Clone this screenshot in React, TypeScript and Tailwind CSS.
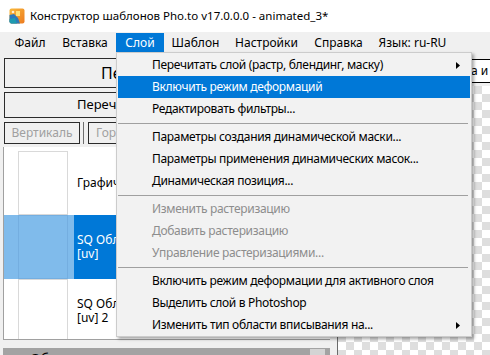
import React from "react";

type Item = { t: string; arrow?: boolean; hl?: boolean; dis?: boolean } | "sep";

const menuItems: Item[] = [
  { t: "Перечитать слой (растр, блендинг, маску)", arrow: true },
  { t: "Включить режим деформаций", hl: true },
  { t: "Редактировать фильтры..." },
  "sep",
  { t: "Параметры создания динамической маски..." },
  { t: "Параметры применения динамических масок..." },
  { t: "Динамическая позиция..." },
  "sep",
  { t: "Изменить растеризацию", dis: true },
  { t: "Добавить растеризацию", dis: true },
  { t: "Управление растеризациями...", dis: true },
  "sep",
  { t: "Включить режим деформации для активного слоя" },
  { t: "Выделить слой в Photoshop" },
  { t: "Изменить тип области вписывания на...", arrow: true },
];

function AppIcon() {
  return (
    <svg width="16" height="16" viewBox="0 0 16 16">
      <defs>
        <linearGradient id="ig" x1="0" y1="0" x2="1" y2="1">
          <stop offset="0" stopColor="#f9b93a" />
          <stop offset="1" stopColor="#ec7a1f" />
        </linearGradient>
      </defs>
      <rect x="0.5" y="0.5" width="15" height="15" rx="2" fill="url(#ig)" />
      <path d="M0.5 7 L5 6 L9 10 L11 15.5 L2.5 15.5 Q0.5 15.5 0.5 13.5 Z" fill="#2d79b9" />
      <path d="M0.5 11 L6 10 L8 15.5 L2.5 15.5 Q0.5 15.5 0.5 13.5 Z" fill="#1f9bb0" />
      <rect x="7" y="3" width="4" height="5" fill="#ffe27a" />
      <circle cx="4" cy="4" r="1.3" fill="#ffffff" opacity="0.8" />
    </svg>
  );
}

function Arrow() {
  return (
    <svg width="4" height="7" viewBox="0 0 4 7">
      <path d="M0 0 L4 3.5 L0 7 Z" fill="#000" />
    </svg>
  );
}

const menuBar: { t: string; w: string; hl?: boolean }[] = [
  { t: "Файл", w: "w-[48px]" },
  { t: "Вставка", w: "w-[62px]" },
  { t: "Слой", w: "w-[48px]", hl: true },
  { t: "Шаблон", w: "w-[63px]" },
  { t: "Настройки", w: "w-[79px]" },
  { t: "Справка", w: "w-[65px]" },
  { t: "Язык: ru-RU", w: "w-[83px]" },
];

function ListRow({ lines, selected }: { lines: string[]; selected?: boolean }) {
  return (
    <div className="flex h-[64px] shrink-0">
      <div className={`w-[70px] h-full pl-[14px] pr-[5px] ${selected ? "bg-[#80bbeb]" : "bg-white"}`}>
        <div className={`w-[50px] h-full border ${selected ? "border-[#74aee0]" : "border-[#d9d9d9]"}`} />
      </div>
      <div
        className={`flex-1 flex flex-col justify-center pl-[3px] leading-[14px] whitespace-nowrap ${
          selected ? "bg-[#0078d7] text-white" : "bg-white text-black"
        }`}
      >
        {lines.map((l) => (
          <div key={l}>{l}</div>
        ))}
      </div>
    </div>
  );
}

export default function App() {
  return (
    <div className="w-[490px] h-[355px] overflow-hidden relative bg-[#f0f0f0] text-[12px] text-black font-['Noto_Sans',sans-serif]">
      {/* Title bar */}
      <div className="h-[32px] bg-white flex items-center">
        <div className="ml-[9px] w-[16px] h-[16px]">
          <AppIcon />
        </div>
        <div className="ml-[5px] whitespace-nowrap text-[11.5px]">
          Конструктор шаблонов Pho.to v17.0.0.0 - animated_3*
        </div>
      </div>

      {/* Menu bar */}
      <div className="h-[21px] flex pl-[6px]">
        {menuBar.map((m) => (
          <div
            key={m.t}
            className={`${m.w} h-[19px] mt-[1px] flex items-center justify-center whitespace-nowrap ${
              m.hl ? "bg-[#0078d7] text-white" : ""
            }`}
          >
            {m.t}
          </div>
        ))}
      </div>

      {/* Content */}
      <div className="flex h-[302px]">
        {/* Left panel */}
        <div className="w-[330px] flex flex-col pl-[3px] pt-[5px]">
          <div className="ml-[1px] h-[30px] border border-[#2b2b2b] bg-[#f0f0f0] flex items-center pl-[96px] text-[16px] whitespace-nowrap overflow-hidden">
            Перечитать PSD
          </div>
          <div className="ml-[1px] mt-[4px] h-[26px] border border-[#2b2b2b] bg-[#f0f0f0] flex items-center pl-[72px] text-[13px] whitespace-nowrap overflow-hidden">
            Перечитать выбранный слой
          </div>
          <div className="ml-[1px] mt-[4px] h-[22px] flex items-stretch">
            <div className="w-[76px] border border-[#2b2b2b] flex items-center justify-center text-[#a0a0a0]">
              Вертикаль
            </div>
            <div className="ml-[3px] w-[1px] bg-[#6e6e6e]" />
            <div className="ml-[4px] flex-1 border border-[#2b2b2b] flex items-center pl-[7px] text-[#a0a0a0]">
              Горизонталь
            </div>
          </div>
          <div className="mt-[3px] h-[193px] border-l border-b border-[#a0a0a0] bg-white flex flex-col overflow-hidden pt-[4px]">
            <ListRow lines={["Графический слой"]} />
            <ListRow lines={["SQ Область вписывания", "[uv]"]} selected />
            <ListRow lines={["SQ Область вписывания", "[uv] 2"]} />
          </div>
          <div className="mt-[8px] flex-1 bg-[#a3a3a3] flex overflow-hidden">
            <div className="pl-[27px] pt-[2px] text-[14px] leading-[18px]">Объекты</div>
            <div className="ml-auto w-[15px] mt-[1px] mr-[5px] bg-[#d4d4d4]" />
          </div>
        </div>

        {/* Splitter */}
        <div className="w-[7px]" />

        {/* Canvas */}
        <div className="flex-1 border-l border-[#6b6b6b] flex flex-col pt-[6px]">
          <div className="h-[24px] bg-white border-y border-black flex items-center pl-[133px] whitespace-nowrap">
            а и
          </div>
          <div className="mt-[3px] flex-1 bg-[conic-gradient(#dedede_25%,#ffffff_0_50%,#dedede_0_75%,#ffffff_0)] bg-[length:16px_16px]" />
        </div>
      </div>

      {/* Dropdown menu */}
      <div className="absolute left-[116px] top-[52px] w-[356px] bg-[#f2f2f2] border border-[#cccccc] px-[1px] pt-[1px] tracking-[-0.32px] shadow-[2px_2px_3px_rgba(0,0,0,0.35)]">
        {menuItems.map((it, i) =>
          it === "sep" ? (
            <div key={i} className="h-[6px] flex items-center pr-[2px]">
              <div className="h-[1px] w-full bg-[#a0a0a0]" />
            </div>
          ) : (
            <div
              key={i}
              className={`h-[22px] flex items-center pl-[34px] pr-[10px] whitespace-nowrap ${
                it.hl ? "bg-[#0078d7] text-white" : it.dis ? "text-[#8d8d8d]" : "text-black"
              }`}
            >
              <span className="flex-1">{it.t}</span>
              {it.arrow && <Arrow />}
            </div>
          )
        )}
      </div>
    </div>
  );
}
